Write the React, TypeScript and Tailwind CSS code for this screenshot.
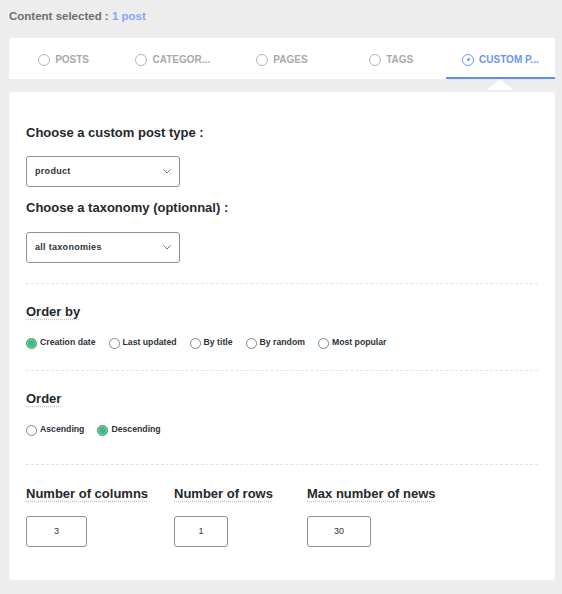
import React from 'react';

const tabs = [
  { label: 'POSTS' },
  { label: 'CATEGOR...' },
  { label: 'PAGES' },
  { label: 'TAGS' },
  { label: 'CUSTOM P...', active: true },
];

const Radio: React.FC<{ label: string; checked?: boolean }> = ({ label, checked }) => (
  <label className="flex items-center gap-[3px]">
    {checked ? (
      <span className="w-[11px] h-[11px] rounded-full border border-[#3aa574] bg-[#47b582] shadow-[inset_0_0_0_1px_#7fd3aa]" />
    ) : (
      <span className="w-[11px] h-[11px] rounded-full border border-[#7e8993] bg-white" />
    )}
    <span className="text-[8.7px] font-bold text-[#2c3338]">{label}</span>
  </label>
);

const Select: React.FC<{ value: string }> = ({ value }) => (
  <div className="w-[154px] h-[31px] border border-[#8c8f94] rounded-[3px] flex items-center justify-between pl-[8px] pr-[8px]">
    <span className="text-[9px] font-bold text-[#2c3338] tracking-[0.3px]">{value}</span>
    <svg width="8" height="5" viewBox="0 0 8 5" fill="none">
      <path d="M0.5 0.5 L4 4 L7.5 0.5" stroke="#666" strokeWidth="0.9" />
    </svg>
  </div>
);

const Heading: React.FC<{ children: React.ReactNode; dotted?: boolean }> = ({ children, dotted }) => (
  <h3
    className={`text-[13px] leading-4 font-bold text-[#23282d] ${
      dotted ? 'underline decoration-dotted decoration-[#c3c4c7] underline-offset-[3px]' : ''
    }`}
  >
    {children}
  </h3>
);

const NumberBox: React.FC<{ value: string; width: string }> = ({ value, width }) => (
  <div className={`${width} h-[31px] border border-[#8c8f94] rounded-[3px] flex items-center justify-center`}>
    <span className="text-[9px] text-[#2c3338]">{value}</span>
  </div>
);

const App: React.FC = () => {
  return (
    <div
      className="min-h-[594px] bg-[#ededed] pl-[9px] pr-[7px] pt-[9px] pb-[14px]"
      style={{ fontFamily: '"Liberation Sans", Arial, sans-serif' }}
    >
      {/* Header */}
      <p className="text-[11.5px] leading-[14px] font-bold text-[#6b6e73]">
        Content selected : <span className="text-[#86a6f5]">1 post</span>
      </p>

      {/* Tabs */}
      <div className="mt-[15px] bg-white grid grid-cols-5 h-[41px]">
        {tabs.map((tab) => (
          <div
            key={tab.label}
            className={`relative flex items-center justify-center gap-[5px] pt-[2px] ${
              tab.active ? 'border-b-2 border-[#5b8ff0] pt-[4px]' : ''
            }`}
          >
            {tab.active ? (
              <span className="w-[12px] h-[12px] rounded-full border-[1.5px] border-[#6d95f2] flex items-center justify-center">
                <span className="w-[3px] h-[3px] rounded-full bg-[#6d95f2]" />
              </span>
            ) : (
              <span className="w-[12px] h-[12px] rounded-full border-[1.5px] border-[#b4b6b9]" />
            )}
            <span
              className={`text-[10px] font-bold ${
                tab.active ? 'text-[#6d95f2]' : 'text-[#a7aaad]'
              }`}
            >
              {tab.label}
            </span>
            {tab.active && (
              <span className="absolute left-1/2 -translate-x-1/2 top-full mt-[2px] w-0 h-0 border-l-[13px] border-r-[13px] border-b-[11px] border-l-transparent border-r-transparent border-b-white" />
            )}
          </div>
        ))}
      </div>

      {/* Content card */}
      <div className="mt-[13px] bg-white rounded-[3px] px-[17px] pt-[33px] pb-[33px]">
        <Heading>Choose a custom post type :</Heading>
        <div className="mt-[15px]">
          <Select value="product" />
        </div>

        <div className="mt-[13px]">
          <Heading>Choose a taxonomy (optionnal) :</Heading>
        </div>
        <div className="mt-[16px]">
          <Select value="all taxonomies" />
        </div>

        <div className="mt-[20px] border-t border-dashed border-[#e3e3e3]" />

        <div className="mt-[20px]">
          <Heading dotted>Order by</Heading>
        </div>
        <div className="mt-[17px] flex items-center gap-[13px] h-[12px]">
          <Radio label="Creation date" checked />
          <Radio label="Last updated" />
          <Radio label="By title" />
          <Radio label="By random" />
          <Radio label="Most popular" />
        </div>

        <div className="mt-[21px] border-t border-dashed border-[#e3e3e3]" />

        <div className="mt-[20px]">
          <Heading dotted>Order</Heading>
        </div>
        <div className="mt-[17px] flex items-center gap-[13px] h-[12px]">
          <Radio label="Ascending" />
          <Radio label="Descending" checked />
        </div>

        <div className="mt-[28px] border-t border-dashed border-[#e3e3e3]" />

        <div className="mt-[21px] flex">
          <div className="w-[148px]">
            <Heading dotted>Number of columns</Heading>
            <div className="mt-[14px]">
              <NumberBox value="3" width="w-[61px]" />
            </div>
          </div>
          <div className="w-[133px]">
            <Heading dotted>Number of rows</Heading>
            <div className="mt-[14px]">
              <NumberBox value="1" width="w-[54px]" />
            </div>
          </div>
          <div>
            <Heading dotted>Max number of news</Heading>
            <div className="mt-[14px]">
              <NumberBox value="30" width="w-[64px]" />
            </div>
          </div>
        </div>
      </div>
    </div>
  );
};

export default App;
